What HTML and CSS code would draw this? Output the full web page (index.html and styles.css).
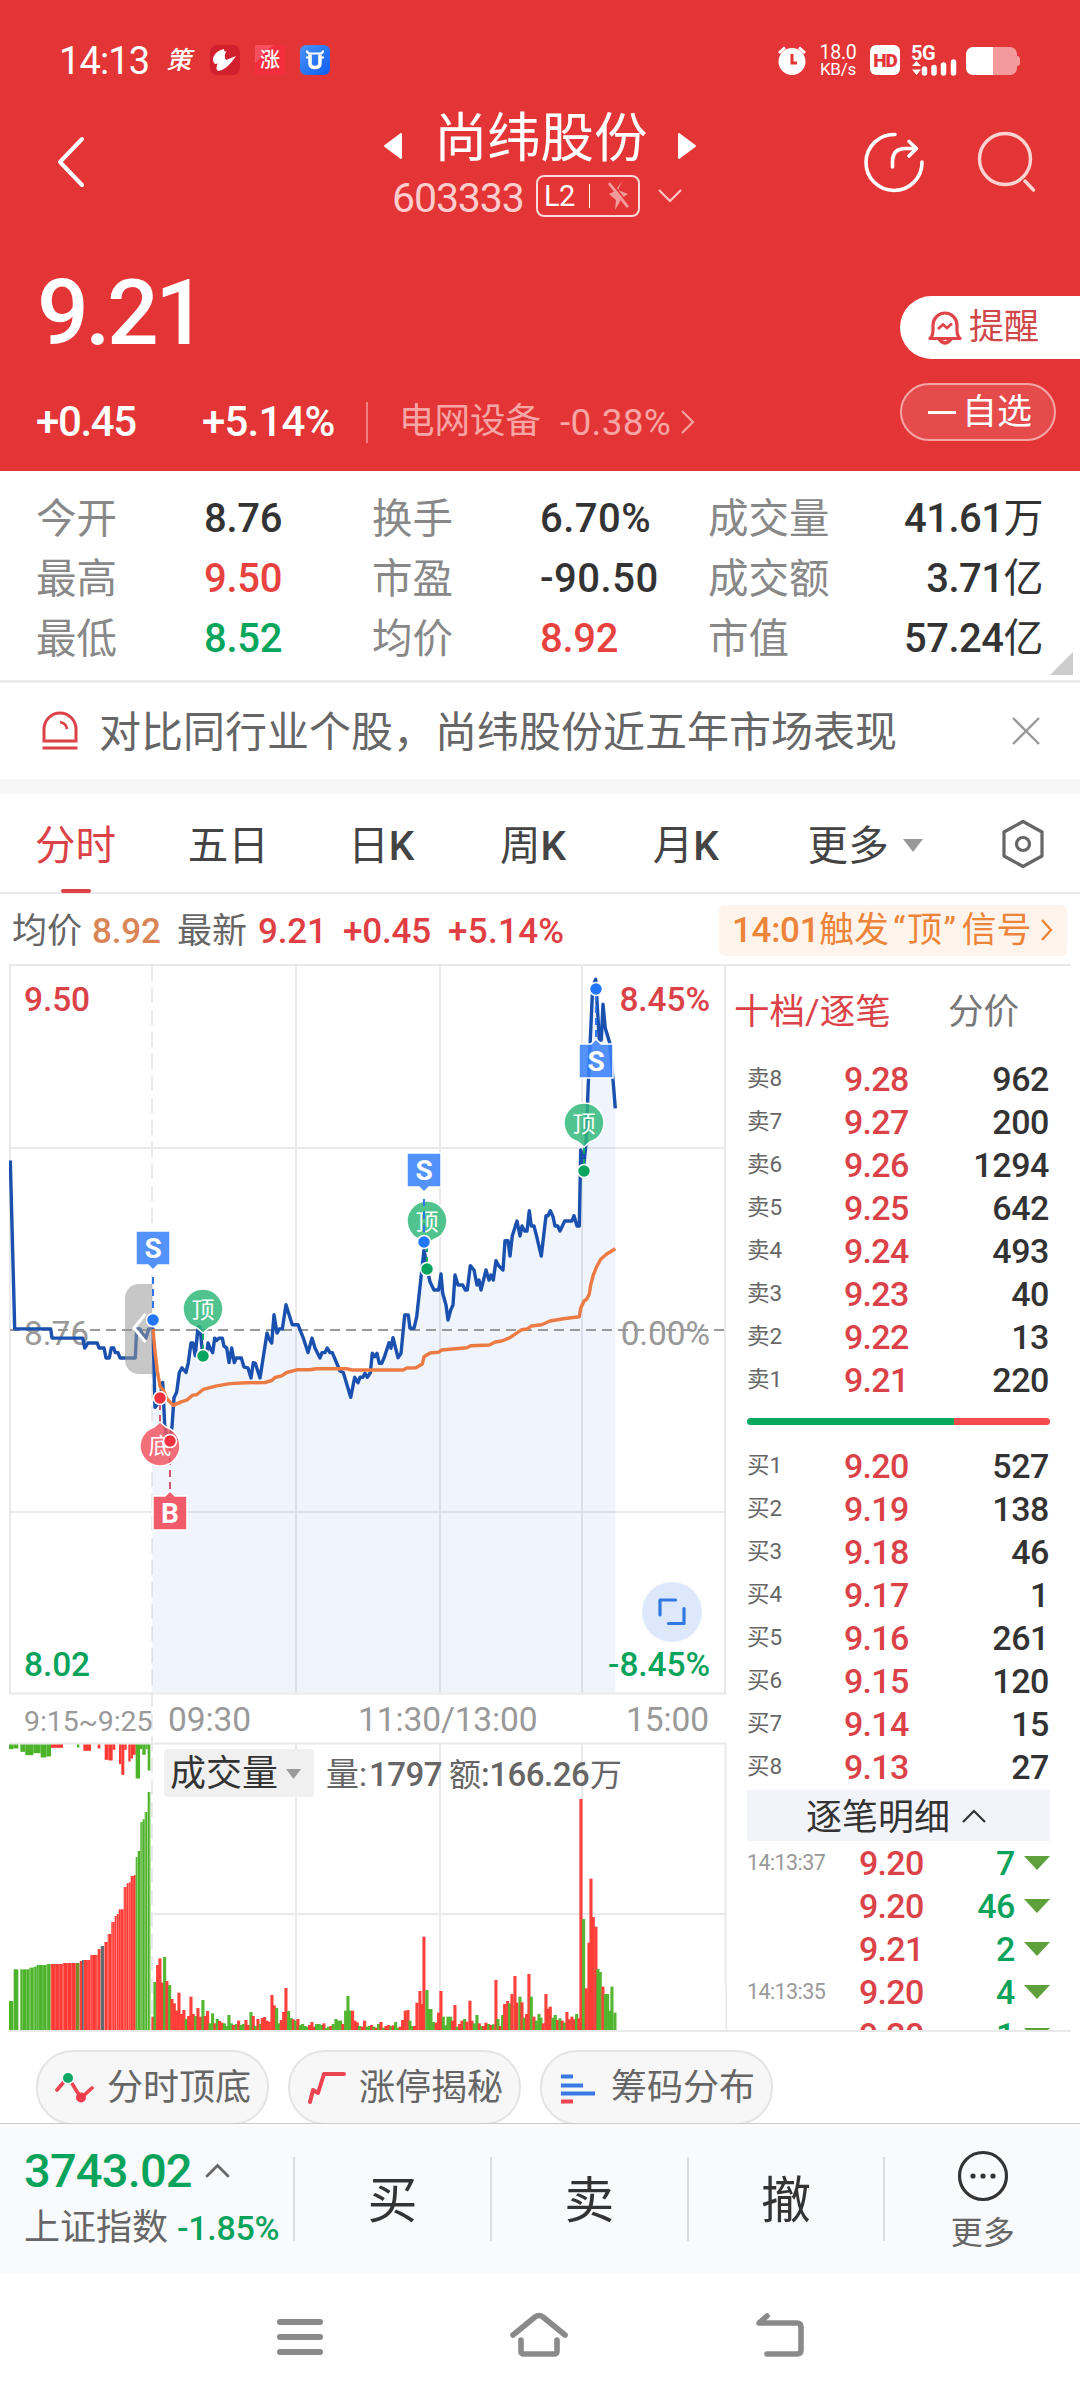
FILE: index.html
```html
<!DOCTYPE html>
<html lang="zh-CN">
<head>
<meta charset="utf-8">
<title>尚纬股份 603333</title>
<link rel="stylesheet" href="styles.css">
</head>
<body>
<header class="head">
  <div class="status">
    <span class="clock">14:13</span>
    <span class="app app-ce">策</span>
    <span class="app app-bird"><svg width="30" height="30" viewBox="0 0 30 30"><path d="M14 4C5 6 1 13 4 18Q6 20 8 18Q5 23 8 26Q17 25 26 11L16 15Q13 10 17 6Q14 8 14 4Z" fill="#fff"/></svg></span>
    <span class="app app-zhang">涨</span>
    <span class="app app-bull"><svg width="30" height="30" viewBox="0 0 30 30"><path d="M10 9.500V18Q10 22.500 15 22.500T20 18V9.500" fill="none" stroke="#fff" stroke-width="3.600"/><path d="M7 5.500Q7 8.500 10 8.500H20Q23 8.500 23 5.500M6 12.500H10M20 12.500H24" fill="none" stroke="#fff" stroke-width="2.200"/></svg></span>
    <svg class="alarm" width="30" height="30" viewBox="0 0 30 30"><circle cx="15" cy="16.500" r="13.500" fill="#fff"/><path d="M2 8L8 2.500M28 8L22 2.500" stroke="#fff" stroke-width="3"/><path d="M15 9V18H20" stroke="#E33536" stroke-width="3" fill="none"/></svg>
    <span class="speed"><b>18.0</b><b>KB/s</b></span>
    <span class="hd">HD</span>
    <svg class="signal" width="46" height="35" viewBox="0 -4 46 35"><text x="0" y="14.500" class="g5">5G</text><path d="M1 21L5.500 16L10 21ZM1 24.500L5.500 30L10 24.500Z" fill="#fff"/><path d="M13.500 24V28M23 22.500V28M32.500 20V28M42.500 17V28" stroke="#fff" stroke-width="5.500" stroke-linecap="round"/></svg>
    <span class="battery"><i></i></span>
  </div>
  <div class="titlebar">
    <svg class="back" width="30" height="52" viewBox="0 0 30 52"><path d="M25 3L3 26L25 49" fill="none" stroke="#fff" stroke-width="4" stroke-linecap="round" stroke-linejoin="round"/></svg>
    <div class="title">
      <div class="name">
        <svg width="18" height="26" viewBox="0 0 18 26"><path d="M17 1V25L1 13Z" fill="#fff" stroke="#fff" stroke-width="2" stroke-linejoin="round"/></svg>
        <span>尚纬股份</span>
        <svg width="18" height="26" viewBox="0 0 18 26"><path d="M1 1V25L17 13Z" fill="#fff" stroke="#fff" stroke-width="2" stroke-linejoin="round"/></svg>
      </div>
      <div class="code">
        <span class="num">603333</span>
        <span class="l2">L2<i></i><svg width="24" height="32" viewBox="0 0 24 32"><path d="M15 1L11 10L21 14L15 18L8 30L9 20L2 14L8 11Z" fill="#F39A9B"/><path d="M2 3L21 27" stroke="#F39A9B" stroke-width="3"/><path d="M4 2L23 26" stroke="#E33536" stroke-width="1.500"/></svg></span>
        <svg class="drop" width="24" height="14" viewBox="0 0 24 14"><path d="M1 1L12 12L23 1" fill="none" stroke="#FFC4C4" stroke-width="2.200"/></svg>
      </div>
    </div>
    <svg class="share" width="62" height="62" viewBox="0 0 62 62"><path d="M32 3.500A28 28 0 1 0 59 31" fill="none" stroke="#fff" stroke-width="3.600" stroke-linecap="round"/><path d="M29.500 36V30Q30 17.500 42 17.500H53M46 10.500L53.500 17.500L46 25" fill="none" stroke="#fff" stroke-width="3.600" stroke-linecap="round" stroke-linejoin="round"/></svg>
    <svg class="search" width="62" height="62" viewBox="0 0 62 62"><circle cx="29" cy="28" r="25.500" fill="none" stroke="#FFD2D2" stroke-width="3.400"/><path d="M49 50L57.500 59" stroke="#FFD2D2" stroke-width="3.400" stroke-linecap="round"/></svg>
  </div>
  <div class="quote">
    <div class="price">
      <strong>9.21</strong>
      <div class="change">
        <span class="c1">+0.45</span><span class="c2">+5.14%</span><i></i>
        <span class="sector">电网设备</span><span class="sectorpct">-0.38%</span>
        <svg width="14" height="24" viewBox="0 0 14 24"><path d="M1 1L12 12L1 23" fill="none" stroke="#F7A0A0" stroke-width="2.200"/></svg>
      </div>
    </div>
    <div class="actions">
      <div class="remind"><svg width="34" height="36" viewBox="0 0 34 36"><path d="M2 28.500Q5 26 5 20V15A12 12 0 0 1 29 15V20Q29 26 32 28.500Z" fill="none" stroke="#E04348" stroke-width="3.200" stroke-linejoin="round"/><path d="M10 19L15 14.500L19 18L24 13.500" fill="none" stroke="#E04348" stroke-width="2.800"/><path d="M11 29Q17 37 23 29" fill="none" stroke="#E04348" stroke-width="3.400"/></svg>提醒</div>
      <div class="watch"><i></i>自选</div>
    </div>
  </div>
</header>

<section class="stats">
  <span>今开</span><b>8.76</b><span>换手</span><b class="w">6.70%</b><span>成交量</span><b class="r">41.61<u>万</u></b>
  <span>最高</span><b class="up">9.50</b><span>市盈</span><b class="w">-90.50</b><span>成交额</span><b class="r">3.71<u>亿</u></b>
  <span>最低</span><b class="down">8.52</b><span>均价</span><b class="up">8.92</b><span>市值</span><b class="r">57.24<u>亿</u></b>
  <i class="corner"></i>
</section>

<section class="notice">
  <svg width="38" height="40" viewBox="0 0 38 40"><path d="M3 30V18A16 16 0 0 1 35 18V30Z" fill="none" stroke="#DB4248" stroke-width="3"/><path d="M1.500 37H36.500" stroke="#DB4248" stroke-width="3.200"/><path d="M19 11Q25 12 26 18" fill="none" stroke="#DB4248" stroke-width="2.600"/></svg>
  <span>对比同行业个股，尚纬股份近五年市场表现</span>
  <svg class="close" width="28" height="28" viewBox="0 0 28 28"><path d="M1 1L27 27M27 1L1 27" stroke="#999" stroke-width="2.400"/></svg>
</section>

<nav class="tabs">
  <span class="on">分时</span><span>五日</span><span>日<b>K</b></span><span>周<b>K</b></span><span>月<b>K</b></span><span>更多<i></i></span>
  <svg width="44" height="50" viewBox="0 0 44 50"><path d="M22 2.500L41 13V37L22 47.500L3 37V13Z" fill="none" stroke="#666" stroke-width="3.200" stroke-linejoin="round"/><circle cx="22" cy="25" r="6.500" fill="none" stroke="#666" stroke-width="3.200"/></svg>
</nav>

<section class="info">
  <span>均价</span><b class="avg">8.92</b><span class="i2">最新</span><b>9.21</b><b class="i4">+0.45</b><b class="i5">+5.14%</b>
  <div class="alert"><b>14:01</b>触发<q>顶</q>信号<svg width="12" height="24" viewBox="0 0 12 24"><path d="M1 2L10 12L1 22" fill="none" stroke="#EF8535" stroke-width="2.400"/></svg></div>
</section>

<main class="board">
  <svg class="chart" width="718" height="1064" viewBox="9 966 718 1064">
    <defs>
      <g id="pinS"><path d="M-17 -17H17V17H5L0 22L-5 17H-17Z" fill="#3B82FB" fill-opacity=".88" stroke="#fff" stroke-width="1.500"/><text class="pt" y="10">S</text></g>
      <g id="pinTop"><path d="M-6 19A20 20 0 1 1 6 19L0 24Z" fill="#2EB77A" fill-opacity=".84" stroke="#fff" stroke-width="1.500"/><text class="pc" y="9">顶</text></g>
    </defs>
    <g class="grid">
      <path d="M10 966V1693M725 966V1693M296 966V1693M440 966V1693M582 966V1693M10 1148H725M10 1512H725"/>
      <path d="M9 1693.500H727M9 1743.500H726M725.500 1743V1985M726.500 1985V2030M152 1914H726M296 1744V2030M440 1744V2030M582 1744V2030"/>
      <path d="M152 966V2030" stroke-dasharray="15 7"/>
    </g>
    <path id="area"/>
    <path d="M10 1330H725" class="zero"/>
    <g class="axis">
      <text x="24" y="1010.500" class="t-up">9.50</text><text x="710" y="1010.500" class="t-up end">8.45%</text>
      <text x="24" y="1345">8.76</text><text x="710" y="1345" class="end">0.00%</text>
      <text x="24" y="1676" class="t-down">8.02</text><text x="710" y="1676" class="t-down end">-8.45%</text>
      <text x="24" y="1731" class="small">9:15~9:25</text><text x="168" y="1731">09:30</text><text x="358" y="1731">11:30/13:00</text><text x="709" y="1731" class="end">15:00</text>
    </g>
    <path id="price"/>
    <path id="avg"/>
    <path d="M152 1284H139A14 14 0 0 0 125 1298V1360A14 14 0 0 0 139 1374H152Z" fill="#999" fill-opacity=".55"/>
    <path d="M145.500 1314L134 1328L145.500 1342" fill="none" stroke="#fff" stroke-width="3"/>
    <g class="dash">
      <path d="M153 1277V1316M424 1199V1240M596 994V1040" stroke="#2F74F2"/>
      <path d="M160 1403V1424M170 1446V1492" stroke="#D2566B"/>
      <path d="M203 1333V1352M427 1245V1266M584 1147V1166" stroke="#14A566"/>
    </g>
    <use href="#pinS" x="153" y="1248"/>
    <use href="#pinTop" x="203" y="1309"/>
    <path d="M154 1427A20 20 0 1 0 166 1427L160 1422Z" fill="#F2555F" fill-opacity=".84" stroke="#fff" stroke-width="1.500"/><text class="pc" x="160" y="1454">底</text>
    <path d="M153 1496H165L170 1491L175 1496H187V1530H153Z" fill="#F04B5A" fill-opacity=".9" stroke="#fff" stroke-width="1.500"/><text class="pt" x="170" y="1523">B</text>
    <use href="#pinTop" x="427" y="1221"/>
    <use href="#pinS" x="424" y="1170"/>
    <path d="M424 1199V1240" stroke="#2F74F2" stroke-width="2" stroke-dasharray="7 6"/>
    <use href="#pinTop" x="584" y="1123"/>
    <path d="M579 1044H591L596 1039L601 1044H613V1078H579Z" fill="#3B82FB" fill-opacity=".88" stroke="#fff" stroke-width="1.500"/><text class="pt" x="596" y="1071">S</text>
    <g class="dots">
      <circle cx="153" cy="1320" r="6.500" fill="#2276FA"/><circle cx="424" cy="1242" r="6.500" fill="#2276FA"/><circle cx="596" cy="989" r="6.500" fill="#2276FA"/>
      <circle cx="203" cy="1356" r="6.500" fill="#08A561"/><circle cx="427" cy="1269" r="6.500" fill="#08A561"/><circle cx="584" cy="1171" r="6.500" fill="#08A561"/>
      <circle cx="160" cy="1398" r="6.500" fill="#F2323F"/><circle cx="170" cy="1441" r="6.500" fill="#F2323F"/>
    </g>
    <circle cx="672" cy="1612" r="30" fill="#DEE8FD"/>
    <path d="M660 1615V1600H675.500M684 1608.500V1623.500H668.500" fill="none" stroke="#2F78DE" stroke-width="3.200" stroke-linecap="round" stroke-linejoin="round"/>
    <g id="volume"></g>
    <rect x="164" y="1749" width="150" height="48" rx="4" fill="#F0F0F0"/>
    <text x="170" y="1785.500" class="sel">成交量</text><path d="M286 1769H301L293.500 1779Z" fill="#999"/>
    <text x="326" y="1786" class="vol">量:</text><text x="369" y="1786" class="vol n">1797</text><text x="449" y="1786" class="vol h">额</text><text x="481" y="1786" class="vol n">:166.26</text><text x="590" y="1786" class="vol h">万</text>
  </svg>
  <aside class="book">
    <div class="booktabs"><span class="on">十档/逐笔</span><span>分价</span></div>
    <ul>
      <li><span>卖8</span><em>9.28</em><b>962</b></li>
      <li><span>卖7</span><em>9.27</em><b>200</b></li>
      <li><span>卖6</span><em>9.26</em><b>1294</b></li>
      <li><span>卖5</span><em>9.25</em><b>642</b></li>
      <li><span>卖4</span><em>9.24</em><b>493</b></li>
      <li><span>卖3</span><em>9.23</em><b>40</b></li>
      <li><span>卖2</span><em>9.22</em><b>13</b></li>
      <li><span>卖1</span><em>9.21</em><b>220</b></li>
    </ul>
    <div class="ratio"><i></i></div>
    <ul>
      <li><span>买1</span><em>9.20</em><b>527</b></li>
      <li><span>买2</span><em>9.19</em><b>138</b></li>
      <li><span>买3</span><em>9.18</em><b>46</b></li>
      <li><span>买4</span><em>9.17</em><b>1</b></li>
      <li><span>买5</span><em>9.16</em><b>261</b></li>
      <li><span>买6</span><em>9.15</em><b>120</b></li>
      <li><span>买7</span><em>9.14</em><b>15</b></li>
      <li><span>买8</span><em>9.13</em><b>27</b></li>
    </ul>
    <div class="detail">逐笔明细<svg width="24" height="14" viewBox="0 0 24 14"><path d="M1 13L12 2L23 13" fill="none" stroke="#333" stroke-width="2.200"/></svg></div>
    <ul class="ticks">
      <li><time>14:13:37</time><em>9.20</em><b>7</b><i></i></li>
      <li><time></time><em>9.20</em><b>46</b><i></i></li>
      <li><time></time><em>9.21</em><b>2</b><i></i></li>
      <li><time>14:13:35</time><em>9.20</em><b>4</b><i></i></li>
      <li><time></time><em>9.20</em><b>1</b><i></i></li>
    </ul>
  </aside>
</main>

<section class="chips">
  <div><svg width="40" height="34" viewBox="0 0 40 34"><path d="M2 19L13 6L26 27L37 17" fill="none" stroke="#EC4450" stroke-width="3.600" stroke-linecap="round"/><circle cx="13" cy="7" r="6.500" fill="#F7F7F7"/><circle cx="13" cy="7" r="5" fill="#0FA764"/><circle cx="26" cy="26.500" r="5" fill="#F23C4B"/></svg>分时顶底</div>
  <div><svg width="40" height="34" viewBox="0 0 40 34"><path d="M3 31L6 19L11 22L17 3H37" fill="none" stroke="#EC4450" stroke-width="4" stroke-linecap="round" stroke-linejoin="round"/></svg>涨停揭秘</div>
  <div><svg width="40" height="34" viewBox="0 0 40 34"><path d="M2 5.500H14M2 14.500H24M2 22.500H36" stroke="#3A78E6" stroke-width="4"/><path d="M2 30.500H14" stroke="#EC4450" stroke-width="4"/></svg>筹码分布</div>
</section>

<footer class="trade">
  <div class="index">
    <div class="ix"><strong>3743.02</strong><svg width="25" height="15" viewBox="0 0 25 15"><path d="M2 13L12.500 2.500L23 13" fill="none" stroke="#666" stroke-width="2.800" stroke-linecap="round"/></svg></div>
    <div class="iy"><span>上证指数</span><b>-1.85%</b></div>
  </div>
  <div class="op">买</div><div class="op">卖</div><div class="op">撤</div>
  <div class="op more"><svg width="52" height="52" viewBox="0 0 52 52"><circle cx="26" cy="26" r="23.500" fill="none" stroke="#333" stroke-width="3.200"/><circle cx="16" cy="26" r="2.600" fill="#333"/><circle cx="26" cy="26" r="2.600" fill="#333"/><circle cx="36" cy="26" r="2.600" fill="#333"/></svg>更多</div>
</footer>

<div class="sysnav">
  <svg width="48" height="38" viewBox="0 0 48 38"><path d="M4 4H44M4 19H44M4 34H44" stroke="#8a8a8a" stroke-width="6" stroke-linecap="round"/></svg>
  <svg width="60" height="48" viewBox="0 0 60 48"><path d="M4 24L26 6Q30 3 34 6L56 24M12 29V40Q12 43 15 43H45Q48 43 48 40V29" fill="none" stroke="#8a8a8a" stroke-width="5.600" stroke-linecap="round"/></svg>
  <svg width="52" height="48" viewBox="0 0 52 48"><path d="M13 43H43Q47 43 47 39V16Q47 12 43 12H5L13 5" fill="none" stroke="#8a8a8a" stroke-width="5.600" stroke-linecap="round" stroke-linejoin="round"/></svg>
</div>
<script src="chart.js"></script>
</body>
</html>
```
FILE: styles.css
```css
* { box-sizing: border-box; margin: 0; padding: 0; }
body { width: 1080px; height: 2400px; overflow: hidden; background: #fff; font-family: Roboto, "Noto Sans CJK SC", sans-serif; color: #333; line-height: 1; }
svg { display: block; flex: none; }
i, em { font-style: normal; }
u { text-decoration: none; font-weight: 400; }
ul { list-style: none; }
span, b, strong, em { white-space: nowrap; }
b, strong, em { font-weight: 500; }

.head { height: 471px; background: #E33536; color: #fff; }
.status { display: flex; align-items: center; height: 100px; padding: 20px 63px 0 59px; }
.clock { width: 107px; padding-top: 2px; font-size: 38px; line-height: 40px; letter-spacing: -.9px; }
.app { display: flex; align-items: center; justify-content: center; width: 30px; height: 30px; margin-right: 15px; font-weight: 700; }
.app-ce { margin-right: 14px; font-size: 25px; font-weight: 500; transform: skewX(-14deg); }
.app-bird { border-radius: 7px; background: #D3202E; }
.app-zhang { background: linear-gradient(135deg, #F8505E 30%, #F52E3D 31%); font-size: 20px; font-weight: 500; }
.app-bull { border-radius: 6px; background: linear-gradient(135deg, #4C93F8, #0B5DF0); }
.alarm { margin-left: auto; }
.speed { display: flex; flex-direction: column; width: 40px; margin-left: 11px; font-size: 19.500px; line-height: 17px; text-align: center; }
.speed b { font-weight: 400; letter-spacing: -.2px; }
.speed b + b { font-size: 17px; line-height: 16px; }
.hd { width: 30px; height: 30px; margin-left: 12px; border-radius: 6px; background: #fff; color: #E33536; font-size: 19px; font-weight: 900; line-height: 31px; text-align: center; letter-spacing: -1px; }
.signal { margin: -4px 0 0 11px; }
.g5 { font-size: 20px; font-weight: 700; fill: #fff; letter-spacing: -.5px; }
.battery { position: relative; width: 51px; height: 28px; margin: 2px 0 0 9px; border-radius: 7px; background: linear-gradient(90deg, #fff 27px, #F29A9C 27px); }
.battery i { position: absolute; right: -3px; top: 9px; width: 4px; height: 10px; border-radius: 0 3px 3px 0; background: #F29A9C; }

.titlebar { display: flex; height: 130px; padding-left: 57px; }
.back { margin-top: 36px; }
.title { width: 318px; margin-left: 297px; padding-top: 10px; }
.name { display: flex; align-items: center; height: 58px; font-size: 53.500px; line-height: 58px; }
.name span { width: 244px; margin-left: 32px; letter-spacing: -.2px; }
.name svg { margin-top: 14px; }
.code { display: flex; align-items: center; height: 42px; margin: 7px 0 0 8px; }
.num { width: 144px; padding-top: 4px; font-size: 41px; color: #FFCDCD; letter-spacing: -1.100px; }
.l2 { display: flex; align-items: center; width: 104px; height: 42px; padding: 0 7px 0 6px; border: 2.500px solid #fbd9d9; border-radius: 8px; font-size: 29px; letter-spacing: -.5px; }
.l2 i { width: 2px; height: 24px; margin: 0 17px 0 14px; background: #fff; }
.drop { margin-left: 18px; }
.share { margin: 31px 0 0 161px; }
.search { margin: 31px 0 0 51px; }

.quote { display: flex; justify-content: space-between; }
.price strong { display: block; height: 100px; margin: 33px 0 0 37px; font-size: 91px; line-height: 100px; letter-spacing: -3.500px; }
.change { display: flex; align-items: center; height: 60px; margin-top: 29px; padding-left: 36px; font-size: 42px; font-weight: 500; letter-spacing: -1.400px; }
.c1 { width: 166px; }
.c2 { width: 164px; letter-spacing: -.8px; }
.change i { width: 2px; height: 41px; margin-right: 31px; background: #F08081; }
.sector { width: 161px; color: #F7A5A5; font-size: 35.500px; font-weight: 400; letter-spacing: 0; }
.sectorpct { width: 121px; color: #F7A5A5; font-size: 37px; font-weight: 400; letter-spacing: .3px; }
.actions { width: 180px; padding-top: 66px; }
.remind { display: flex; align-items: center; height: 63px; padding-left: 28px; border-radius: 32px 0 0 32px; background: #fff; color: #D0474A; font-size: 35px; line-height: 63px; }
.remind svg { margin-right: 7px; }
.watch { display: flex; align-items: center; width: 156px; height: 58px; margin-top: 24px; padding-left: 26px; border: 2px solid #F4A5A5; border-radius: 29px; background: #E64B4C; font-size: 35px; }
.watch i { width: 28px; height: 3px; margin-right: 6px; background: #fff; }

.stats { position: relative; display: grid; grid-template-columns: repeat(4, 168px) 120px 1fr; grid-auto-rows: 60px; align-items: center; height: 212px; padding: 18px 37px 0 36px; border-bottom: 3px solid #ececec; font-size: 40px; letter-spacing: -.3px; }
.stats span { color: #888; font-size: 40.500px; letter-spacing: 0; }
.stats .w { letter-spacing: .5px; }
.stats .r { text-align: right; letter-spacing: -.5px; }
.up { color: #E8423F; }
.down { color: #08A55C; }
.corner { position: absolute; right: 7px; bottom: 5px; border-left: 23px solid transparent; border-bottom: 23px solid #ccc; }

.notice { display: flex; align-items: center; height: 111px; padding: 0 40px 0 41px; border-bottom: 15px solid #f7f7f7; color: #666; font-size: 42px; }
.notice span { margin-left: 20px; padding-top: 3px; }
.close { margin-left: auto; }

.tabs { display: flex; align-items: center; height: 100px; padding: 2px 35px 0; border-bottom: 2px solid #e8e8e8; font-size: 40.500px; color: #444; }
.tabs span { position: relative; width: 152px; height: 98px; padding-top: 3px; line-height: 96px; }
.tabs span:nth-child(1) { width: 153px; }
.tabs span:nth-child(2) { width: 161px; }
.tabs span:nth-child(4) { width: 153px; }
.tabs span:nth-child(5) { width: 155px; }
.tabs span:nth-child(6) { display: flex; align-items: center; width: 194px; letter-spacing: .4px; }
.tabs span:nth-child(6) i { margin-left: 14px; border: 10px solid transparent; border-top: 13px solid #999; border-bottom: 0; }
.tabs .on { color: #DB4248; }
.tabs .on::after { content: ""; position: absolute; left: 26px; bottom: 0; width: 30px; height: 4px; border-radius: 2px; background: #DB4248; }

.info { display: flex; align-items: center; height: 70px; padding: 4px 13px 0 12px; font-size: 35px; color: #666; }
.info b { width: 65px; margin-left: 11px; color: #E03E42; letter-spacing: -.2px; }
.info b.avg { width: 66px; margin-left: 10px; color: #D98555; }
.info .i2 { margin-left: 19px; }
.info .i4 { width: 87px; margin-left: 20px; }
.info .i5 { width: 118px; margin-left: 18px; letter-spacing: .3px; }
.alert { display: flex; align-items: center; width: 348px; height: 51px; margin-left: auto; margin-top: -2px; padding-left: 13px; border-radius: 6px; background: #FFF4EC; color: #EC8439; font-size: 35px; white-space: nowrap; }
.info .alert b { width: 87px; margin: 0; color: inherit; letter-spacing: -.3px; }
.alert q { margin: 0 4px; quotes: "“" "”"; letter-spacing: 1.500px; }
.alert svg { margin-left: 10px; }

.board { display: flex; height: 1068px; margin: 0 9px; border-top: 2px solid #e9e9e9; border-bottom: 2px solid #e9e9e9; overflow: hidden; }
.grid path { fill: none; stroke: #e9e9e9; stroke-width: 2; }
#area { fill: #3C6EEB; fill-opacity: .08; }
.zero { stroke: #999; stroke-width: 2; stroke-dasharray: 10 6; }
#price { fill: none; stroke: #1A50AE; stroke-width: 3.400; stroke-linejoin: round; }
#avg { fill: none; stroke: #EC7B43; stroke-width: 3.400; stroke-linejoin: round; }
.axis text { font-size: 33.500px; fill: #999; letter-spacing: -.1px; }
.axis .small { font-size: 28.500px; }
.axis .end { text-anchor: end; }
.axis .t-up { fill: #DB4248; font-weight: 500; }
.axis .t-down { fill: #0AA35C; font-weight: 500; }
.dash path { fill: none; stroke-width: 2; stroke-dasharray: 7 5; }
.dots circle { stroke: #fff; stroke-width: 1.500; }
.pt { font-size: 28px; font-weight: 700; fill: #fff; text-anchor: middle; }
.pc { font-size: 23px; fill: #fff; text-anchor: middle; }
.sel { font-size: 36px; fill: #333; }
.vol { font-size: 33px; fill: #666; }
.vol.n { font-weight: 500; letter-spacing: -.5px; }
.vol.h { font-size: 32px; }

.book { width: 344px; padding-left: 20px; }
.booktabs { display: flex; align-items: center; height: 91px; margin-left: -13px; padding-top: 2px; font-size: 35.500px; color: #777; }
.booktabs span { flex: none; }
.booktabs .on { width: 214px; color: #DB4248; }
.book li { display: grid; grid-template-columns: 97px 1fr auto; align-items: center; width: 302px; height: 43px; font-size: 34px; }
.book li span { color: #666; font-size: 22.500px; }
.book em { color: #DB4248; letter-spacing: -.7px; }
.book b { letter-spacing: -.4px; }
.ratio { display: flex; align-items: center; height: 43px; }
.ratio i { width: 303px; height: 7px; margin-top: -2px; border-radius: 4px; background: linear-gradient(90deg, #08A85E 207px, #F54A4B 207px); }
.detail { display: flex; align-items: center; width: 303px; height: 51px; margin-top: 2px; padding: 4px 0 0 59px; background: #F2F4F9; font-size: 36px; }
.detail svg { margin: -3px 0 0 12px; }
.book .ticks li { grid-template-columns: 112px 1fr auto 26px; width: 303px; }
.ticks time { font-size: 21.500px; color: #999; letter-spacing: -.6px; }
.ticks b { margin-right: 9px; color: #0AA35C; }
.ticks i { border: 13px solid transparent; border-top: 14px solid #5DA03C; border-bottom: 0; }

.chips { display: flex; gap: 19px; height: 91px; padding: 18px 0 0 36px; overflow: hidden; }
.chips div { display: flex; align-items: center; flex: none; width: 233px; height: 75px; padding-left: 17px; border: 2px solid #e4e4e4; border-radius: 37px; background: #f7f7f7; color: #666; font-size: 36px; white-space: nowrap; }
.chips svg { margin-right: 12px; }

.trade { display: flex; align-items: center; height: 151px; border-top: 1.500px solid #ccc; background: #F9FAFC; }
.index { width: 294px; padding-left: 24px; }
.ix { display: flex; align-items: center; height: 50px; color: #0AA35C; font-size: 47px; letter-spacing: -.8px; }
.ix strong { margin-top: -3px; }
.ix svg { margin: -4px 0 0 13px; }
.iy { display: flex; align-items: center; height: 48px; margin-top: 6px; padding-top: 2px; color: #666; font-size: 36px; }
.iy b { margin-left: 9px; color: #0AA35C; font-size: 34px; letter-spacing: -.3px; }
.op { display: flex; align-items: center; justify-content: center; width: 197.300px; height: 84px; padding-top: 4px; border-left: 2px solid #dcdcdf; font-size: 50px; color: #333; white-space: nowrap; }
.more { flex-direction: column; padding: 0; color: #666; font-size: 32px; gap: 15px; }

.sysnav { display: flex; justify-content: center; align-items: center; gap: 185px; height: 126px; padding-left: 2px; }
.sysnav svg:nth-child(2), .sysnav svg:nth-child(3) { margin-top: -4px; }
```
FILE: chart.js
```js
// Each series holds points as x,y pairs with the scale and origin they were sampled at.
const place = (s, ox, oy, kx, ky) => s.trim().split(/\s+/).map(p => {
  const [x, y] = p.split(',').map(Number);
  return [ox + x / kx, oy + y / ky];
});
const join = pts => 'M' + pts.map(p => p[0].toFixed(1) + ' ' + p[1].toFixed(1)).join('L');

const auction = place(`31,550 44,990 152,990 156,1014 248,1014 254,1040 264,1027 292,1027 297,1040 312,1040 318,1066
328,1066 334,1040 341,1040 346,1052 354,1052 360,1066 406,1066 410,990 420,990 425,1000 438,1014 446,990 459,990`, 0, 950, 3, 2.613);
const morning = place(`459,990 465,1195 470,1190 479,1170 488,1130 494,1240 500,1270 510,1280 516,1245 522,1170 530,1155 538,1104
546,1092 558,1104 565,1078 573,1027 579,1027 586,1060 594,985 600,985 606,1040 609,1063 613,1050 618,1066 624,1027
630,1040 638,1052 644,1014 650,1020 657,1014 667,1014 672,1035 680,1040 687,1078 695,1040 703,1078 709,1066 724,1066
732,1090 744,1092 753,1118 760,1078 766,1080 780,1118 794,1040 801,1001 806,1014 815,1027 822,953 831,1001 838,990
847,990 858,927 866,950 877,979 894,979 910,1014 924,1052 936,1014 945,1040 960,1066 966,1052 975,1052 982,1040
990,1052 997,1052 1020,1100 1030,1104`, 0, 950, 3, 2.613);
const later = place(`2,1342 14,1282 24,1298 30,1282 38,1282 45,1270 52,1282 61,1268 67,1210 74,1220 81,1210 88,1240 95,1240
103,1222 117,1178 123,1195 129,1163 144,1223 153,1210 164,1095 175,1095 180,1135 192,1135 200,1100 222,900 226,920 231,957
240,995 252,1020 266,1020 273,972 278,1030 288,1065 294,1110 302,1080 309,1065 315,975 324,1005 338,1005 346,1020 352,1020
361,947 372,960 381,1005 387,990 393,1020 408,960 417,990 423,975 430,990 438,932 446,947 459,960 465,872 474,872 480,918
487,857 501,813 510,858 516,828 524,843 531,843 538,782 544,828 552,828 560,860 574,918 588,797 594,797 601,782 609,800
615,828 623,828 630,843 644,813 666,813 672,797 681,828 688,828 692,600 702,640 708,580 715,400 728,110 737,88 748,270
754,270 759,163 766,235 779,278 790,400 796,475`, 350, 950, 3, 3);
const avg = place(`459,990 465,1050 472,1100 480,1140 490,1150 500,1172 520,1190 545,1180 560,1176 578,1163 590,1162 610,1148
650,1139 690,1133 740,1131 795,1130 815,1125 825,1117 845,1113 860,1104 890,1097 930,1097 950,1094 1040,1094`, 0, 950, 3, 2.613)
  .concat(place(`5,1260 160,1260 170,1254 198,1253 217,1242 222,1220 240,1209 265,1207 275,1200 350,1193 362,1187 418,1185
436,1176 455,1173 480,1163 515,1139 532,1137 544,1128 575,1124 600,1113 640,1106 688,1100 692,1075 702,1053 710,1048
718,1032 722,1005 730,975 740,950 752,928 770,912 796,896`, 350, 950, 3, 3));

const day = morning.concat(later);
document.getElementById('price').setAttribute('d', join(auction.concat(day)));
document.getElementById('avg').setAttribute('d', join(avg));
document.getElementById('area').setAttribute('d', join(day) + 'V1692H152Z');

const vol = document.getElementById('volume');
const color = { r: '#FF3933', g: '#4DB32B', b: '#666A70', o: '#7B8C2C' };
function bar(x, y, w, h, c, o) {
  const r = document.createElementNS('http://www.w3.org/2000/svg', 'rect');
  for (const [k, v] of Object.entries({ x, y, width: w, height: h, fill: color[c], 'fill-opacity': o || 1 })) r.setAttribute(k, v);
  vol.appendChild(r);
}

// Call auction: matched volume steps (start, end, top, colour) in thirds of a pixel.
`27,40,1083,g 41,55,988,g 61,88,988,g 88,100,983,g 100,110,980,g 110,140,975,g 140,152,972,g 152,188,972,r 188,228,969,r
228,239,969,o 239,246,963,r 246,252,960,b 252,271,960,r 271,293,945,r 293,302,927,r 302,313,918,b 313,323,906,r
323,334,882,r 334,344,846,r 344,350,828,r 350,356,822,r 356,371,808,r 371,380,741,r 380,386,730,r 386,392,727,r
392,402,708,r 402,407,705,r 407,413,651,g 413,421,633,g 421,428,546,g 428,434,538,g 434,442,516,g 443,451,456,g`
  .split(/\s+/).forEach(s => {
    const [a, b, t, c] = s.split(',');
    bar(a / 3, 1640 + t / 3, (b - a) / 3, (1170 - t) / 3, c);
  });
for (let x = 22; x < 150; x += 4.1) {
  const r = document.createElementNS('http://www.w3.org/2000/svg', 'rect');
  for (const [k, v] of Object.entries({ x, y: 1792, width: .7, height: 238, fill: '#fff', 'fill-opacity': .3 })) r.setAttribute(k, v);
  vol.appendChild(r);
}

// Unmatched volume, hanging from the top edge.
`27,40,328,g 40,55,326,g 61,76,336,g 76,100,346,g 100,122,340,g 122,139,353,g 139,153,350,g 153,189,324,r 231,238,323,g
250,273,333,r 293,301,326,r 314,326,360,r 326,338,362,r 338,346,330,r 357,364,373,r 364,373,405,r 373,380,330,r
385,392,365,r 392,399,356,r 399,407,345,r 407,420,416,g 420,427,328,g 427,437,345,g 437,443,328,g 443,451,392,g`
  .split(/\s+/).forEach(s => {
    const [a, b, e, c] = s.split(',');
    bar(a / 3, 1744.5, (b - a) / 3, (e - 314) / 3, c);
  });

// One bar per minute of continuous trading.
const minutes = (s, ox) => s.trim().split(/\s+/).forEach(m => {
  const [, x, t, c] = m.match(/(\d+),(\d+)(\w)/);
  bar(ox + x / 3 - 1.6, 1640 + t / 3, 3.1, (1170 - t) / 3, c, .96);
});
minutes(`459,1130r 465,1026g 473,975r 480,955r 487,1028r 494,951g 501,1023r 509,1035g 516,1077r 523,1090r 530,1112r 537,1058r
545,1122r 552,1110r 559,1137g 566,1128r 573,1070r 580,1122r 587,1128g 594,1104r 602,1130r 609,1080g 616,1128r 623,1113r
630,1150g 638,1120g 645,1150r 652,1137g 659,1143r 666,1148r 673,1150g 680,1158g 687,1125g 694,1150g 701,1155r 709,1152g
716,1142r 723,1155g 730,1152g 738,1140r 745,1155r 753,1116g 760,1128r 767,1158g 774,1137r 781,1152g 787,1134r 794,1131r
801,1142r 808,1145r 816,1065r 823,1096r 830,1104g 837,1150g 844,1140r 851,1116r 858,1044r 866,1113g 873,1134g 880,1138r
887,1142g 894,1137r 901,1155g 908,1152g 915,1158g 922,1160g 929,1155r 936,1146r 943,1160r 950,1152g 957,1152g 965,1155g
972,1150r 979,1164g 986,1160g 993,1158r 1000,1152g 1008,1137g 1015,1142g 1022,1142g 1029,1152r 1037,1112g 1044,1068g
1051,1112g 1058,1112r 1065,1142r 1072,1147r 1079,1158g`, 0);
minutes(`7,1160r 14,1142r 21,1160g 28,1158g 35,1155r 42,1160g 49,1163r 56,1152g 63,1146r 71,1163g 78,1158r 86,1155r 93,1158g
100,1156r 107,1146g 114,1163g 121,1160r 128,1140r 136,1112r 144,1110r 150,1142g 157,1158g 164,1158r 171,1088r 180,1053r
186,1092r 192,890r 201,1050g 207,1107g 213,1107g 221,1146g 229,1148r 236,1118r 243,1053r 250,1130g 257,1156g 264,1130g
272,1130g 278,1142r 285,1095r 292,1160g 299,1152r 306,1142r 314,1137g 321,1145r 330,1082r 336,1142r 343,1150g 351,1125g
358,1150r 365,1158g 372,1158r 378,1148r 386,1152g 393,1155r 400,1153g 408,1020r 414,1137g 421,1158r 428,1125g 434,1092r
443,1083r 449,1090g 456,1062r 465,1008r 471,1088r 480,1070g 486,1087r 493,1133g 500,1122r 507,1002r 514,1070g 522,1130r
529,1142g 537,1122g 543,1133g 550,1150r 558,1062r 565,1106r 571,1100r 579,1133g 586,1125g 593,1140r 600,1135g 607,1142r
614,1148g 621,1116r 628,1138r 636,1130r 643,1138r 650,1122g 657,1135r 663,477r 671,837g 679,1045r 687,908r 693,716r
700,831r 708,860r 714,987g 721,996g 729,1040r 736,1062g 743,1062g 750,1112g 756,1040g 765,1118g`, 360);
```
